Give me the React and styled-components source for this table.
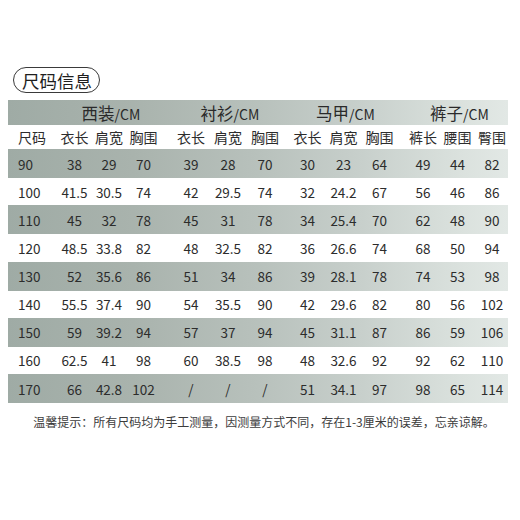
import React from "react";
import styled, { createGlobalStyle } from "styled-components";

const Global = createGlobalStyle`
  html, body { margin: 0; padding: 0; background: #fff; }
  body { font-family: "Noto Sans CJK SC", "Noto Sans", sans-serif; color: #2a2a2a; }
`;

const Page = styled.div`
  width: 520px;
  height: 520px;
  box-sizing: border-box;
  padding: 67px 0 0 8px;
`;

const TitlePill = styled.div`
  display: inline-flex;
  align-items: center;
  box-sizing: border-box;
  height: 26px;
  margin-left: 5px;
  padding: 0 7px 0 8px;
  border: 1.3px solid #3a3a3a;
  border-radius: 13px;
  font-size: 17.5px;
  color: #1e1e1e;
`;

const Table = styled.div`
  margin-top: 7px;
  width: 500px;
  overflow: hidden;
`;

const Row = styled.div`
  display: flex;
  align-items: center;
  height: ${(p) => p.$h}px;
  background: ${(p) =>
    p.$shaded
      ? "linear-gradient(90deg, #9faba5 0%, #a9b3ad 25%, #b8c1bc 50%, #c7cfcb 70%, #dae1dd 90%, #e2e8e5 100%)"
      : "#fff"};
`;

const SizeCell = styled.div`
  width: 49.25px;
  flex: none;
  box-sizing: border-box;
  padding-left: 10px;
  font-size: ${(p) => (p.$head ? 14 : 13.5)}px;
  color: #2c2c2c;
`;

const Group = styled.div`
  display: flex;
  flex: none;
  margin-left: ${(p) => p.$offset}px;
`;

const Cell = styled.div`
  width: ${(p) => p.$w}px;
  flex: none;
  text-align: center;
  white-space: nowrap;
  font-size: ${(p) => (p.$head ? 14 : 13.5)}px;
  color: #2c2c2c;
`;

const GroupTitle = styled.div`
  width: ${(p) => p.$w * 3}px;
  flex: none;
  text-align: center;
  padding-left: 4px;
  box-sizing: border-box;
  font-size: 16.5px;
  color: #2a2a2a;
  white-space: nowrap;
`;

const Unit = styled.span`
  font-size: 14px;
`;

const Note = styled.div`
  margin-top: 11px;
  width: 508px;
  text-align: center;
  font-size: 12px;
  line-height: 16px;
  color: #3c3c3c;
  padding-left: 4px;
  box-sizing: border-box;
`;

const groups = [
  { title: "西装", cols: ["衣长", "肩宽", "胸围"], w: 34.5, offset: 0 },
  { title: "衬衫", cols: ["衣长", "肩宽", "胸围"], w: 37, offset: 11.75 },
  { title: "马甲", cols: ["衣长", "肩宽", "胸围"], w: 36, offset: 6 },
  { title: "裤子", cols: ["裤长", "腰围", "臀围"], w: 34.5, offset: 8.25 },
];

const data = [
  ["90", "38", "29", "70", "39", "28", "70", "30", "23", "64", "49", "44", "82"],
  ["100", "41.5", "30.5", "74", "42", "29.5", "74", "32", "24.2", "67", "56", "46", "86"],
  ["110", "45", "32", "78", "45", "31", "78", "34", "25.4", "70", "62", "48", "90"],
  ["120", "48.5", "33.8", "82", "48", "32.5", "82", "36", "26.6", "74", "68", "50", "94"],
  ["130", "52", "35.6", "86", "51", "34", "86", "39", "28.1", "78", "74", "53", "98"],
  ["140", "55.5", "37.4", "90", "54", "35.5", "90", "42", "29.6", "82", "80", "56", "102"],
  ["150", "59", "39.2", "94", "57", "37", "94", "45", "31.1", "87", "86", "59", "106"],
  ["160", "62.5", "41", "98", "60", "38.5", "98", "48", "32.6", "92", "92", "62", "110"],
  ["170", "66", "42.8", "102", "/", "/", "/", "51", "34.1", "97", "98", "65", "114"],
];

export default function App() {
  return (
    <Page>
      <Global />
      <TitlePill>尺码信息</TitlePill>
      <Table>
        <Row $shaded $h={25}>
          <SizeCell />
          {groups.map((g) => (
            <Group key={g.title} $offset={g.offset}>
              <GroupTitle $w={g.w}>
                {g.title}
                <Unit>/CM</Unit>
              </GroupTitle>
            </Group>
          ))}
        </Row>
        <Row $h={24}>
          <SizeCell $head>尺码</SizeCell>
          {groups.map((g) => (
            <Group key={g.title} $offset={g.offset}>
              {g.cols.map((c) => (
                <Cell key={c} $w={g.w} $head>
                  {c}
                </Cell>
              ))}
            </Group>
          ))}
        </Row>
        {data.map((r, i) => {
          const shaded = i % 2 === 0;
          return (
            <Row key={r[0]} $shaded={shaded} $h={shaded ? 29 : 27.25}>
              <SizeCell>{r[0]}</SizeCell>
              {groups.map((g, gi) => (
                <Group key={g.title} $offset={g.offset}>
                  {[0, 1, 2].map((k) => (
                    <Cell key={k} $w={g.w}>
                      {r[1 + gi * 3 + k]}
                    </Cell>
                  ))}
                </Group>
              ))}
            </Row>
          );
        })}
      </Table>
      <Note>温馨提示：所有尺码均为手工测量，因测量方式不同，存在1-3厘米的误差，忘亲谅解。</Note>
    </Page>
  );
}
